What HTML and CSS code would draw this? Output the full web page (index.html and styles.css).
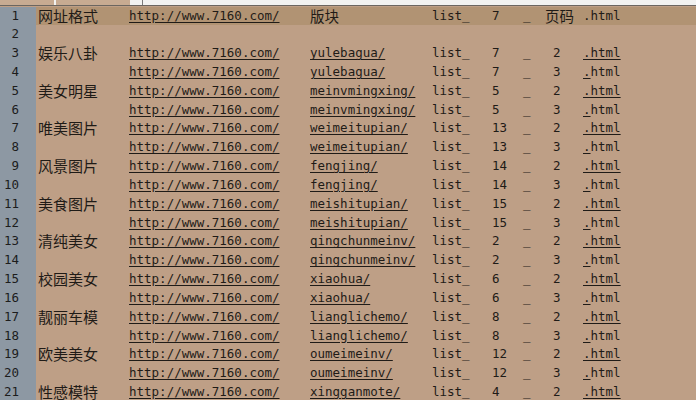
FILE: index.html
```html
<!DOCTYPE html>
<html lang="zh">
<head>
<meta charset="utf-8">
<title>7160</title>
<link rel="stylesheet" href="styles.css">
</head>
<body>
<div class="tabs">
  <span class="tab t1"></span><span class="tab t2"></span><span class="tabgap"></span><span class="tabline"></span>
</div>
<div class="editor">
  <div class="row head"><span class="ln">1</span><span class="c name">网址格式</span><span class="c url u">http://www.7160.com/</span><span class="c blk cjk">版块</span><span class="c lst">list_</span><span class="c num">7</span><span class="c us">_</span><span class="c pg cjk">页码</span><span class="c ext">.html</span></div>
  <div class="row"><span class="ln">2</span></div>
  <div class="row"><span class="ln">3</span><span class="c name">娱乐八卦</span><span class="c url u">http://www.7160.com/</span><span class="c blk u">yulebagua/</span><span class="c lst">list_</span><span class="c num">7</span><span class="c us">_</span><span class="c pg d">2</span><span class="c ext u">.html</span></div>
  <div class="row"><span class="ln">4</span><span class="c name"></span><span class="c url u">http://www.7160.com/</span><span class="c blk u">yulebagua/</span><span class="c lst">list_</span><span class="c num">7</span><span class="c us">_</span><span class="c pg d">3</span><span class="c ext"><span class="u">.</span>html</span></div>
  <div class="row"><span class="ln">5</span><span class="c name">美女明星</span><span class="c url u">http://www.7160.com/</span><span class="c blk u">meinvmingxing/</span><span class="c lst">list_</span><span class="c num">5</span><span class="c us">_</span><span class="c pg d">2</span><span class="c ext u">.html</span></div>
  <div class="row"><span class="ln">6</span><span class="c name"></span><span class="c url u">http://www.7160.com/</span><span class="c blk u">meinvmingxing/</span><span class="c lst">list_</span><span class="c num">5</span><span class="c us">_</span><span class="c pg d">3</span><span class="c ext"><span class="u">.</span>html</span></div>
  <div class="row"><span class="ln">7</span><span class="c name">唯美图片</span><span class="c url u">http://www.7160.com/</span><span class="c blk u">weimeitupian/</span><span class="c lst">list_</span><span class="c num">13</span><span class="c us">_</span><span class="c pg d">2</span><span class="c ext u">.html</span></div>
  <div class="row"><span class="ln">8</span><span class="c name"></span><span class="c url u">http://www.7160.com/</span><span class="c blk u">weimeitupian/</span><span class="c lst">list_</span><span class="c num">13</span><span class="c us">_</span><span class="c pg d">3</span><span class="c ext"><span class="u">.</span>html</span></div>
  <div class="row"><span class="ln">9</span><span class="c name">风景图片</span><span class="c url u">http://www.7160.com/</span><span class="c blk u">fengjing/</span><span class="c lst">list_</span><span class="c num">14</span><span class="c us">_</span><span class="c pg d">2</span><span class="c ext u">.html</span></div>
  <div class="row"><span class="ln">10</span><span class="c name"></span><span class="c url u">http://www.7160.com/</span><span class="c blk u">fengjing/</span><span class="c lst">list_</span><span class="c num">14</span><span class="c us">_</span><span class="c pg d">3</span><span class="c ext"><span class="u">.</span>html</span></div>
  <div class="row"><span class="ln">11</span><span class="c name">美食图片</span><span class="c url u">http://www.7160.com/</span><span class="c blk u">meishitupian/</span><span class="c lst">list_</span><span class="c num">15</span><span class="c us">_</span><span class="c pg d">2</span><span class="c ext u">.html</span></div>
  <div class="row"><span class="ln">12</span><span class="c name"></span><span class="c url u">http://www.7160.com/</span><span class="c blk u">meishitupian/</span><span class="c lst">list_</span><span class="c num">15</span><span class="c us">_</span><span class="c pg d">3</span><span class="c ext"><span class="u">.</span>html</span></div>
  <div class="row"><span class="ln">13</span><span class="c name">清纯美女</span><span class="c url u">http://www.7160.com/</span><span class="c blk u">qingchunmeinv/</span><span class="c lst">list_</span><span class="c num">2</span><span class="c us">_</span><span class="c pg d">2</span><span class="c ext u">.html</span></div>
  <div class="row"><span class="ln">14</span><span class="c name"></span><span class="c url u">http://www.7160.com/</span><span class="c blk u">qingchunmeinv/</span><span class="c lst">list_</span><span class="c num">2</span><span class="c us">_</span><span class="c pg d">3</span><span class="c ext"><span class="u">.</span>html</span></div>
  <div class="row"><span class="ln">15</span><span class="c name">校园美女</span><span class="c url u">http://www.7160.com/</span><span class="c blk u">xiaohua/</span><span class="c lst">list_</span><span class="c num">6</span><span class="c us">_</span><span class="c pg d">2</span><span class="c ext u">.html</span></div>
  <div class="row"><span class="ln">16</span><span class="c name"></span><span class="c url u">http://www.7160.com/</span><span class="c blk u">xiaohua/</span><span class="c lst">list_</span><span class="c num">6</span><span class="c us">_</span><span class="c pg d">3</span><span class="c ext"><span class="u">.</span>html</span></div>
  <div class="row"><span class="ln">17</span><span class="c name">靓丽车模</span><span class="c url u">http://www.7160.com/</span><span class="c blk u">lianglichemo/</span><span class="c lst">list_</span><span class="c num">8</span><span class="c us">_</span><span class="c pg d">2</span><span class="c ext u">.html</span></div>
  <div class="row"><span class="ln">18</span><span class="c name"></span><span class="c url u">http://www.7160.com/</span><span class="c blk u">lianglichemo/</span><span class="c lst">list_</span><span class="c num">8</span><span class="c us">_</span><span class="c pg d">3</span><span class="c ext"><span class="u">.</span>html</span></div>
  <div class="row"><span class="ln">19</span><span class="c name">欧美美女</span><span class="c url u">http://www.7160.com/</span><span class="c blk u">oumeimeinv/</span><span class="c lst">list_</span><span class="c num">12</span><span class="c us">_</span><span class="c pg d">2</span><span class="c ext u">.html</span></div>
  <div class="row"><span class="ln">20</span><span class="c name"></span><span class="c url u">http://www.7160.com/</span><span class="c blk u">oumeimeinv/</span><span class="c lst">list_</span><span class="c num">12</span><span class="c us">_</span><span class="c pg d">3</span><span class="c ext"><span class="u">.</span>html</span></div>
  <div class="row"><span class="ln">21</span><span class="c name">性感模特</span><span class="c url u">http://www.7160.com/</span><span class="c blk u">xingganmote/</span><span class="c lst">list_</span><span class="c num">4</span><span class="c us">_</span><span class="c pg d">2</span><span class="c ext u">.html</span></div>
</div>
</body>
</html>
```

FILE: styles.css
```css
html, body {
  margin: 0;
  padding: 0;
  width: 696px;
  height: 400px;
  overflow: hidden;
  background: #be9f86;
}

.tabs {
  display: flex;
  height: 5px;
  background: #f2f2f0;
  border-bottom: 1px solid #6b6660;
}
.tab {
  display: block;
  height: 5px;
  background: #c7ab92;
}
.t1 { width: 54px; }
.t2 { width: 74px; margin-left: 2px; }
.tabgap { width: 12px; }
.tabline { width: 1px; background: #7a7a7a; }

.editor {
  display: flex;
  flex-direction: column;
  padding-top: 0.5px;
  font-family: "DejaVu Sans Mono", "Noto Sans CJK SC", monospace;
  font-size: 12.5px;
  color: #1f1b17;
}

.row {
  display: grid;
  grid-template-columns: 36px 93px 181px 122px 60px 31px 22px 38px 1fr;
  height: 18.83px;
  line-height: 18.83px;
  white-space: pre;
}
.row.head .c { background: #b19373; }
.row.head { background: #b19373; }

.ln {
  background: #8d98a3;
  text-align: right;
  padding-right: 17px;
  color: #1c1c1c;
}

.name {
  padding-left: 2px;
  font-family: "Noto Sans CJK SC", sans-serif;
  font-size: 15px;
}
.cjk {
  font-family: "Noto Sans CJK SC", sans-serif;
  font-size: 14.5px;
}
.d { padding-left: 8px; }
.u { text-decoration: underline; text-underline-offset: 2px; }
```
